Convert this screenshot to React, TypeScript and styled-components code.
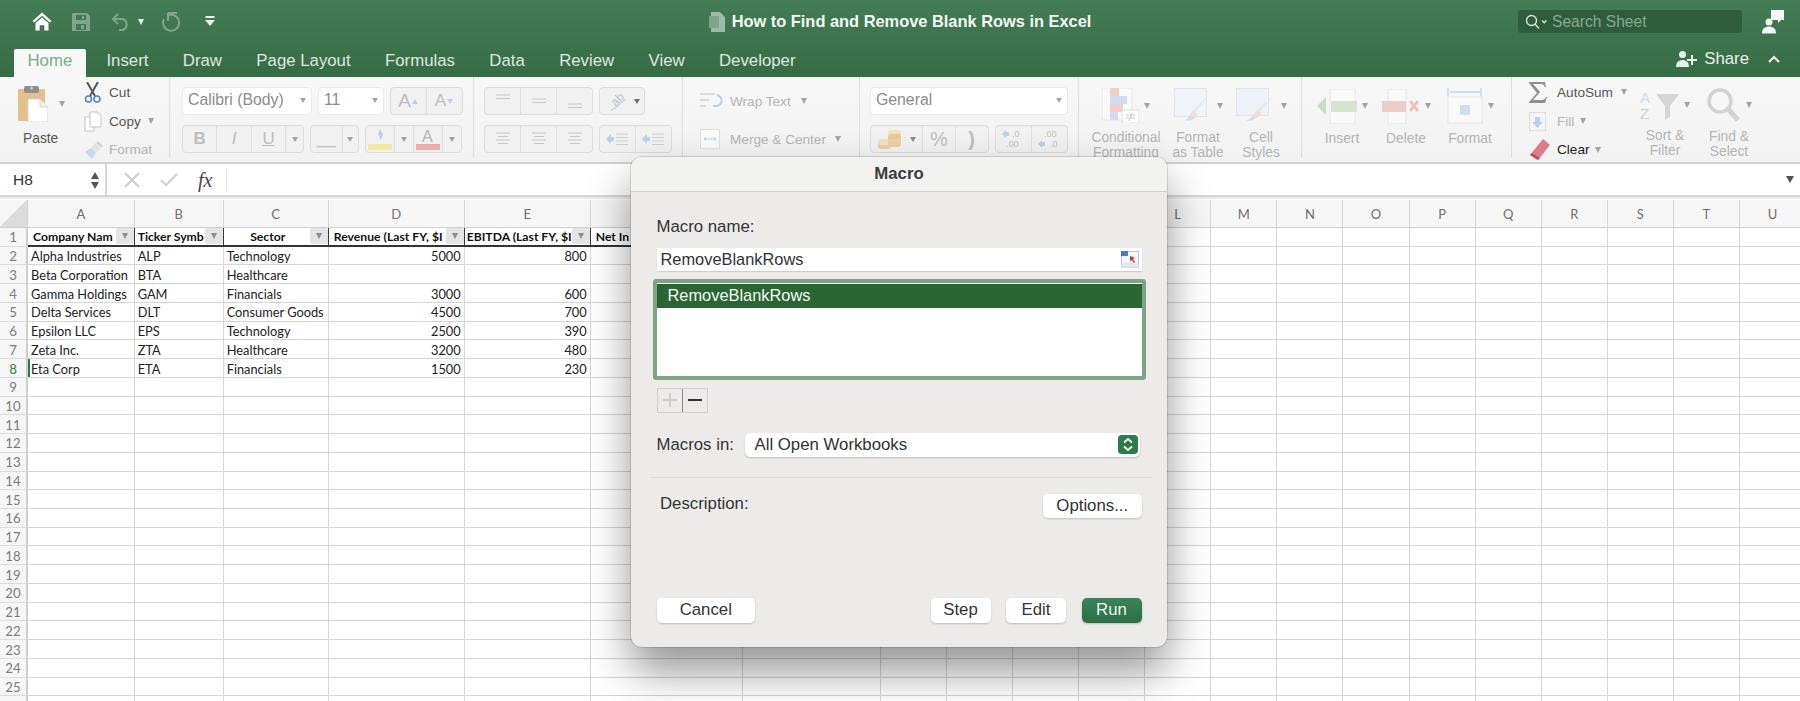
import React from "react";
import styled, { createGlobalStyle } from "styled-components";

const GlobalStyle = createGlobalStyle`
  html, body {
    margin: 0;
    padding: 0;
    background: #fff;
    font-family: "Liberation Sans", Arial, sans-serif;
  }
  * { box-sizing: border-box; }
`;

const Page = styled.div`
  position: relative;
  width: 1800px;
  height: 701px;
  overflow: hidden;
  display: flex;
  flex-direction: column;
`;

/* title bar + tabs */
const Header = styled.header`
  height: 77px;
  flex: none;
  background: linear-gradient(#447c56, #366c44);
  display: flex;
  flex-direction: column;
`;

const TitleRow = styled.div`
  height: 43px;
  display: grid;
  grid-template-columns: 1fr auto 1fr;
  align-items: center;
`;

const QuickAccess = styled.div`
  display: flex;
  align-items: center;
  padding-left: 32px;
`;

const QuickSlot = styled.span<{ $w: number }>`
  width: ${(p) => p.$w}px;
  display: flex;
  align-items: center;
`;

const DocTitle = styled.div`
  display: flex;
  align-items: center;
  gap: 6px;
  color: #f4f7f4;
  font-size: 16.4px;
  font-weight: 700;
`;

const SearchWrap = styled.div`
  display: flex;
  justify-content: flex-end;
  align-items: center;
  padding-right: 16px;
  gap: 20px;
`;

const SearchBox = styled.div`
  width: 224px;
  height: 23px;
  border-radius: 3px;
  background: #2f5d3c;
  display: flex;
  align-items: center;
  gap: 3px;
  padding-left: 7px;
  color: #86a98e;
  font-size: 15.6px;
`;

const TabsRow = styled.nav`
  height: 34px;
  display: flex;
  align-items: flex-end;
  padding-left: 10.5px;
`;

const Tab = styled.div<{ $active?: boolean }>`
  height: 28px;
  line-height: 24px;
  font-size: 16.8px;
  padding: ${(p) => (p.$active ? "0 14px" : "0 17.2px")};
  margin: ${(p) => (p.$active ? "0 3px" : "0")};
  color: ${(p) => (p.$active ? "#7faa88" : "#dfe8e0")};
  background: ${(p) => (p.$active ? "#f6f7f6" : "transparent")};
  border-radius: 2px 2px 0 0;
`;

const ShareWrap = styled.div`
  margin-left: auto;
  height: 34px;
  display: flex;
  align-items: center;
  padding: 0 20px 2px 0;
  color: #e9efe9;
  font-size: 16.8px;
  gap: 7px;
`;

const Chevron = styled.span`
  margin-left: 12px;
  display: flex;
`;

/* ribbon */
const Ribbon = styled.section`
  height: 87px;
  flex: none;
  display: flex;
  background: linear-gradient(#f7f7f7, #f2f2f2);
  border-bottom: 2px solid #cfcfcf;
`;

const Group = styled.div<{ $w: number; $pl: number }>`
  width: ${(p) => p.$w}px;
  flex: none;
  padding-left: ${(p) => p.$pl}px;
  padding-top: 10px;
  margin-bottom: 4px;
  border-right: 1px solid #dedede;
  display: flex;
  &:last-child { border-right: 0; }
`;

const Stack = styled.div<{ $gap?: number }>`
  display: flex;
  flex-direction: column;
  gap: ${(p) => p.$gap ?? 10}px;
`;

const Line = styled.div<{ $gap?: number }>`
  display: flex;
  gap: ${(p) => p.$gap ?? 6}px;
`;

const PasteBlock = styled.div`
  display: flex;
  flex-direction: column;
  width: 66px;
  color: #565656;
  font-size: 13.8px;
`;

const PasteIcon = styled.div`
  display: flex;
  align-items: center;
  gap: 11px;
  margin-top: -2px;
`;

const PasteLabel = styled.div`
  margin: 9px 0 0 5px;
`;

const ActionList = styled.div<{ $top?: number; $w?: number }>`
  display: flex;
  flex-direction: column;
  margin-top: ${(p) => p.$top ?? -9}px;
  ${(p) => (p.$w ? `width: ${p.$w}px;` : "")}
`;

const ActionRow = styled.div<{ $tone?: string; $h?: number }>`
  height: ${(p) => p.$h ?? 28.7}px;
  flex: none;
  display: flex;
  align-items: center;
  font-size: 13.6px;
  color: ${(p) => p.$tone ?? "#b4b4b4"};
`;

const ActionIcon = styled.span<{ $w?: number }>`
  width: ${(p) => p.$w ?? 25}px;
  flex: none;
  display: flex;
  align-items: center;
`;

const SelectBox = styled.div<{ $w: number }>`
  width: ${(p) => p.$w}px;
  height: 28px;
  background: #fff;
  border: 1px solid #eaeaea;
  border-radius: 4px;
  display: flex;
  align-items: center;
  justify-content: space-between;
  padding: 0 5px 2px 5px;
  font-size: 15.8px;
  color: #8c8c8c;
`;

const BtnGroup = styled.div<{ $w: number }>`
  width: ${(p) => p.$w}px;
  height: 28px;
  display: flex;
  background: #f1f1f1;
  border: 1px solid #dcdcdc;
  border-radius: 4px;
`;

const BtnCell = styled.span<{ $grow?: number; $size?: number }>`
  flex: ${(p) => p.$grow ?? 1};
  display: flex;
  align-items: center;
  justify-content: center;
  gap: 1px;
  color: #bebebe;
  font-size: ${(p) => p.$size ?? 17}px;
  border-left: 1px solid #e0e0e0;
  &:first-child { border-left: 0; }
`;

const Caret = styled.span<{ $tone?: string; $s?: number; $ml?: number; $up?: boolean }>`
  display: inline-block;
  flex: none;
  width: 0;
  height: 0;
  margin-left: ${(p) => p.$ml ?? 0}px;
  border-left: ${(p) => (p.$s ?? 6) / 2 + 0.5}px solid transparent;
  border-right: ${(p) => (p.$s ?? 6) / 2 + 0.5}px solid transparent;
  border-${(p) => (p.$up ? "bottom" : "top")}: ${(p) => p.$s ?? 6}px solid ${(p) => p.$tone ?? "#a4a4a4"};
`;

const LargeItem = styled.div<{ $w: number }>`
  width: ${(p) => p.$w}px;
  flex: none;
  display: flex;
  flex-direction: column;
  align-items: center;
  margin-top: 1px;
`;

const LargeIcon = styled.div`
  height: 36px;
  display: flex;
  align-items: center;
  gap: 5px;
  svg { opacity: 0.82; }
`;

const LargeLabel = styled.div`
  margin-top: 7px;
  font-size: 13.8px;
  line-height: 15px;
  text-align: center;
  color: #b4b4b4;
  white-space: nowrap;
`;

/* formula bar */
const FormulaBar = styled.div`
  height: 33px;
  flex: none;
  background: #fff;
  display: flex;
  align-items: center;
  border-bottom: 2px solid #d5d5d5;
  box-shadow: 0 2px 0 #ececec;
`;

const NameBox = styled.div`
  width: 107px;
  height: 100%;
  display: flex;
  align-items: center;
  justify-content: space-between;
  padding: 1px 6px 0 13px;
  font-size: 15.5px;
  color: #333;
  border-right: 2px solid #d8d8d8;
`;

const Stepper = styled.span`
  display: flex;
  flex-direction: column;
  gap: 3px;
`;

const FormulaTools = styled.div`
  display: flex;
  align-items: center;
  gap: 20px;
  padding-left: 17px;
`;

const FxMark = styled.span`
  font-family: "Liberation Serif", serif;
  font-style: italic;
  font-size: 20px;
  color: #444;
  width: 29px;
  border-right: 1px solid #e3e3e3;
  line-height: 22px;
`;

const FormulaCaret = styled.div`
  margin-left: auto;
  padding-right: 6px;
  display: flex;
`;

/* sheet */
const Sheet = styled.div`
  margin-top: 3px;
  flex: 1;
  overflow: hidden;
  display: grid;
  grid-template-columns: 28px 106.7px 89px 105px 136px 126px 152.4px 137.7px repeat(14, 66.1px);
  grid-template-rows: 28px repeat(26, 18.74px);
  font-family: Lato, "Open Sans", sans-serif;
  background: #fff;
`;

const Corner = styled.div`
  background: linear-gradient(135deg, #f6f6f6 50%, #dcdcdc 50%);
  border-right: 1px solid #cfcfcf;
  border-bottom: 1px solid #cfcfcf;
`;

const ColHead = styled.div`
  background: #f6f6f6;
  border-right: 1px solid #d6d6d6;
  border-bottom: 1px solid #cfcfcf;
  display: flex;
  align-items: center;
  justify-content: center;
  padding-top: 1px;
  font-size: 13px;
  color: #6f6f6f;
`;

const RowHead = styled.div<{ $active?: boolean }>`
  background: #f6f6f6;
  border-right: 2px solid #cfcfcf;
  border-bottom: 1px solid #dcdcdc;
  display: flex;
  align-items: center;
  justify-content: center;
  padding-top: 1px;
  font-size: 13.2px;
  color: ${(p) => (p.$active ? "#2d7a4b" : "#7b7b7b")};
`;

const Cell = styled.div<{ $right?: boolean; $mark?: boolean }>`
  border-right: 1px solid #d6d6d6;
  border-bottom: 1px solid #d6d6d6;
  ${(p) => (p.$mark ? "box-shadow: inset 2px 0 0 #2d7a4b;" : "")}
  padding: 1px 3px 0;
  display: flex;
  align-items: center;
  justify-content: ${(p) => (p.$right ? "flex-end" : "flex-start")};
  font-size: 12.8px;
  color: #222;
  white-space: nowrap;
  overflow: hidden;
`;

const FilterCell = styled.div<{ $tail?: boolean }>`
  border-right: 1.5px solid ${(p) => (p.$tail ? "#d6d6d6" : "#3a3a3a")};
  border-bottom: 2px solid #333;
  display: flex;
  align-items: center;
  font-size: 12.2px;
  font-weight: 700;
  color: #111;
  white-space: nowrap;
  overflow: hidden;
`;

const FilterText = styled.span<{ $left?: boolean }>`
  flex: 1;
  min-width: 0;
  padding-left: ${(p) => (p.$left ? 5 : 2)}px;
  text-align: ${(p) => (p.$left ? "left" : "center")};
`;

const FilterButton = styled.span`
  width: 18px;
  height: 16px;
  flex: none;
  background: #e4e4e4;
  border-radius: 2px;
  display: flex;
  align-items: center;
  justify-content: center;
`;

/* macro dialog, floats over the sheet */
const Dialog = styled.div`
  position: absolute;
  left: 631px;
  top: 156.5px;
  width: 536px;
  height: 490px;
  background: #ecebe9;
  border-radius: 11px;
  box-shadow: 0 0 0 1px rgba(0, 0, 0, 0.12), 0 24px 44px rgba(0, 0, 0, 0.42);
  display: flex;
  flex-direction: column;
  color: #333;
  font-size: 16.8px;
`;

const DialogTitle = styled.div`
  height: 35px;
  flex: none;
  background: #f2f2f0;
  border-bottom: 1px solid #d2d2d0;
  border-radius: 11px 11px 0 0;
  display: flex;
  align-items: center;
  justify-content: center;
  font-weight: 700;
  color: #3c3c3c;
`;

const DialogBody = styled.div`
  flex: 1;
  padding: 25px 25.5px 24px;
  display: flex;
  flex-direction: column;
`;

const NameLabel = styled.div`
  height: 20px;
  line-height: 20px;
`;

const NameInput = styled.div`
  margin-top: 11px;
  height: 23px;
  background: #fff;
  display: flex;
  align-items: center;
  justify-content: space-between;
  padding: 0 3px 0 4px;
  font-size: 16.4px;
  box-shadow: 0 1px 1px rgba(0, 0, 0, 0.12);
`;

const MacroList = styled.div`
  margin: 8px -4px 0;
  height: 101px;
  flex: none;
  background: #fff;
  border: 4px solid #7fa384;
  border-radius: 3px;
`;

const MacroItem = styled.div`
  height: 24px;
  margin-top: 1px;
  padding-left: 11px;
  display: flex;
  align-items: center;
  background: #2a6633;
  color: #f4f7f4;
  font-size: 16.4px;
`;

const PlusMinus = styled.div`
  margin-top: 8px;
  width: 51px;
  height: 25px;
  flex: none;
  display: flex;
  border: 1px solid #d0d0ce;
`;

const PlusMinusCell = styled.span<{ $on?: boolean }>`
  flex: 1;
  display: flex;
  align-items: center;
  justify-content: center;
  border-left: ${(p) => (p.$on ? "1px solid #8a8a8a" : "0")};
`;

const SourceRow = styled.div`
  margin-top: 20px;
  display: flex;
  align-items: center;
  height: 24px;
`;

const SourceLabel = styled.div`
  width: 88px;
  flex: none;
`;

const SourceSelect = styled.div`
  width: 395px;
  height: 24px;
  background: #fff;
  border-radius: 5px;
  box-shadow: 0 1px 2px rgba(0, 0, 0, 0.2);
  display: flex;
  align-items: center;
  justify-content: space-between;
  padding: 0 2px 0 10px;
`;

const StepBadge = styled.span`
  width: 20px;
  height: 19px;
  border-radius: 4px;
  background: #2e7a4b;
  display: flex;
  align-items: center;
  justify-content: center;
`;

const Divider = styled.div`
  margin: 20px -10px 0 -6.5px;
  height: 1px;
  flex: none;
  background: #dcdcda;
`;

const DescRow = styled.div`
  margin-top: 16px;
  display: flex;
  justify-content: space-between;
  padding-left: 3.5px;
`;

const DescLabel = styled.div`
  line-height: 20px;
`;

const DialogButton = styled.div<{ $w: number; $primary?: boolean }>`
  width: ${(p) => p.$w}px;
  height: 24.5px;
  border-radius: 5px;
  background: ${(p) => (p.$primary ? "linear-gradient(#3a8358, #2b6f45)" : "#fff")};
  color: ${(p) => (p.$primary ? "#f2f6f2" : "#333")};
  box-shadow: 0 1px 2px rgba(0, 0, 0, 0.2);
  display: flex;
  align-items: center;
  justify-content: center;
`;

const DialogFooter = styled.div`
  margin-top: auto;
  display: flex;
  gap: 15.5px;
  & > :first-child { margin-right: auto; }
`;

/* icons */
const Home = () => (
  <svg width="20" height="19" viewBox="0 0 20 19" fill="#fff">
    <path d="M10 0.5 0.5 9l1.6 1.6L10 3.7l7.9 6.9L19.500 9z" />
    <path d="M3.500 11 10 5.500 16.500 11v7.500h-4.200v-5.300H7.700v5.300H3.500z" />
  </svg>
);
const Save = () => (
  <svg width="18" height="18" viewBox="0 0 18 18" fill="#7fa68c">
    <path d="M1 0h14l3 3v15H0V1zM4 2v5h10V2zM4 11v6h10v-6z" />
    <path d="M10 3h2v3h-2zM9 12h3v4H9z" />
  </svg>
);
const Undo = () => (
  <svg width="20" height="18" viewBox="0 0 20 18" fill="none" stroke="#7fa68c" strokeWidth="2">
    <path d="M7 1 2 6l5 5M2 6h10a6 6 0 0 1 0 11H8" />
  </svg>
);
const Redo = () => (
  <svg width="20" height="20" viewBox="0 0 20 20" fill="none" stroke="#7fa68c" strokeWidth="2">
    <path d="M7 1h9M7 1v8M8 3A8 8 0 1 1 3 7" />
  </svg>
);
const QatMenu = () => (
  <svg width="10" height="11" viewBox="0 0 10 11" fill="#f2f5f2">
    <rect x="0.500" y="0" width="9" height="2" />
    <path d="M0 4h10l-5 6z" />
  </svg>
);
const DocIcon = () => (
  <svg width="17" height="20" viewBox="0 0 17 20">
    <path d="M2 0h9l5 5v15H2z" fill="#9dbca6" />
    <rect x="0" y="4" width="10" height="12" fill="#7fa58c" />
  </svg>
);
const SearchIcon = () => (
  <svg width="24" height="16" viewBox="0 0 24 16" fill="none" stroke="#d8e3da" strokeWidth="1.400">
    <circle cx="6.500" cy="6.500" r="5" />
    <path d="m10 10 4 4.500M17 6.500l2.200 2.200 2.200-2.200" />
  </svg>
);
const Profile = () => (
  <svg width="22" height="24" viewBox="0 0 22 24" fill="#f4f7f4">
    <path d="M9 0h13v10h-3l-3 3v-3H9z" />
    <circle cx="7" cy="12" r="3.500" />
    <path d="M0 23.500c0-5 3-7 7-7s7 2 7 7z" />
  </svg>
);
const AddPerson = () => (
  <svg width="21" height="18" viewBox="0 0 21 18" fill="#e9efe9">
    <circle cx="6.500" cy="4.500" r="3.500" />
    <path d="M0 17c0-5 3-7 6.500-7s6.500 2 6.500 7zM15 5h2v4h4v2h-4v4h-2v-4h-4V9h4z" />
  </svg>
);
const ChevronUp = () => (
  <svg width="12" height="8" viewBox="0 0 12 8" fill="none" stroke="#e9efe9" strokeWidth="2.200">
    <path d="m1 7 5-5 5 5" />
  </svg>
);
const PasteGlyph = () => (
  <svg width="30" height="37" viewBox="0 0 30 37">
    <rect x="0" y="4" width="27" height="32" rx="1" fill="#e3c08d" />
    <rect x="6" y="1" width="15" height="7" rx="2" fill="#8e8e8e" />
    <circle cx="13.500" cy="3" r="1.500" fill="#c9c9c9" />
    <path d="M10 14h12l8 8v15H10z" fill="#fff" stroke="#d5d5d5" />
    <path d="M22 14v8h8" fill="#eee" stroke="#d5d5d5" />
  </svg>
);
const Scissors = () => (
  <svg width="18" height="21" viewBox="0 0 18 21" fill="none">
    <path d="M3 0l8 14M14 0 6 14" stroke="#555" strokeWidth="2" />
    <circle cx="4.500" cy="17" r="3" stroke="#4f84c4" strokeWidth="1.600" />
    <circle cx="13" cy="17" r="3" stroke="#4f84c4" strokeWidth="1.600" />
  </svg>
);
const CopyGlyph = () => (
  <svg width="18" height="21" viewBox="0 0 18 21" fill="#fff" stroke="#c4c4c4">
    <path d="M1 6h9v14H1z" />
    <path d="M6 1h7l4 4v11H6z" />
  </svg>
);
const FormatPainter = () => (
  <svg width="20" height="20" viewBox="0 0 20 20">
    <path d="M11 3l6 6-5 4-5-5z" fill="#e2e2e2" />
    <path d="M7 8l5 5-4 6-7-7z" fill="#c9d8ea" />
    <path d="M14 1l5 5-2 2-5-5z" fill="#d6d6d6" />
  </svg>
);
const Lines = ({ widths, y }: { widths: number[]; y: number }) => (
  <svg width="20" height="18" viewBox="0 0 20 18" stroke="#c8c8c8" strokeWidth="1">
    {widths.map((w, i) => (
      <line key={i} x1={10 - w / 2} x2={10 + w / 2} y1={y + i * 3.500} y2={y + i * 3.500} />
    ))}
  </svg>
);
const Orient = () => (
  <svg width="24" height="22" viewBox="0 0 24 22">
    <text x="6" y="14" fontSize="12" fill="#c0c0c0" fontFamily="Liberation Sans" transform="rotate(-45 12 10)">ab</text>
    <path d="M6 21 21 9" stroke="#c6d6ec" strokeWidth="1.400" />
  </svg>
);
const Indent = () => (
  <svg width="22" height="16" viewBox="0 0 22 16">
    <path d="M0 8l5-5v3h3v4H5v3z" fill="#bcd0ea" />
    <path d="M10 3h12M10 6.500h12M10 10h12M10 13.500h12" stroke="#cfcfcf" />
  </svg>
);
const WrapGlyph = () => (
  <svg width="24" height="18" viewBox="0 0 24 18" fill="none">
    <path d="M0 2h15M0 8h9M0 14h6" stroke="#dcdcdc" strokeWidth="2" />
    <path d="M17 3c6 2 6 9 0 11l-4 0" stroke="#b9cfe9" strokeWidth="2" />
  </svg>
);
const MergeGlyph = () => (
  <svg width="20" height="20" viewBox="0 0 20 20" fill="none">
    <rect x="0.500" y="0.500" width="19" height="19" stroke="#e0e0e0" fill="#fafafa" />
    <path d="M4 10h12M4 10l2-2M4 10l2 2M16 10l-2-2M16 10l-2 2" stroke="#b9cfe9" />
  </svg>
);
const Coins = () => (
  <svg width="26" height="22" viewBox="0 0 26 22">
    <rect x="1" y="14" width="13" height="7" rx="3" fill="#e8d2a4" />
    <rect x="1" y="11" width="13" height="6" rx="3" fill="#f0e0bc" />
    <rect x="11" y="8" width="13" height="11" rx="3" fill="#e8d2a4" />
    <rect x="11" y="2" width="13" height="6" rx="3" fill="#f0e0bc" />
    <rect x="11" y="6" width="13" height="5" rx="2.500" fill="#e4cc9a" />
  </svg>
);
const DecimalUp = () => (
  <svg width="22" height="20" viewBox="0 0 22 20">
    <path d="M0 5l4-4v2h3v4H4v2z" fill="#bcd0ea" />
    <text x="10" y="8" fontSize="9" fill="#c2c2c2" fontFamily="Liberation Sans">.0</text>
    <text x="4" y="18" fontSize="9" fill="#c2c2c2" fontFamily="Liberation Sans">.00</text>
  </svg>
);
const DecimalDown = () => (
  <svg width="22" height="20" viewBox="0 0 22 20">
    <text x="6" y="8" fontSize="9" fill="#c2c2c2" fontFamily="Liberation Sans">.00</text>
    <path d="M0 15l4-4v2h3v4H4v2z" fill="#bcd0ea" />
    <text x="12" y="18" fontSize="9" fill="#c2c2c2" fontFamily="Liberation Sans">.0</text>
  </svg>
);
const Conditional = () => (
  <svg width="37" height="35" viewBox="0 0 37 35">
    <path d="M0 0h30v32H0z" fill="#fafafa" stroke="#e4e4e4" />
    <rect x="8" y="0" width="9" height="8" fill="#eec7c3" />
    <rect x="8" y="8" width="17" height="8" fill="#c8d8f0" />
    <rect x="8" y="16" width="13" height="8" fill="#eec7c3" />
    <rect x="8" y="24" width="8" height="8" fill="#c8d8f0" />
    <rect x="20" y="22" width="17" height="13" fill="#fff" stroke="#dcdcdc" />
    <path d="M24 27h9M24 30h9M30 25l-3 8" stroke="#bdbdbd" />
  </svg>
);
const TableBrush = () => (
  <svg width="38" height="35" viewBox="0 0 38 35">
    <rect x="0.500" y="0.500" width="32" height="28" fill="#eff3f9" stroke="#e1e1e1" />
    <path d="M36 6 20 26l-3-2z" fill="#e6e6e6" />
    <path d="M19 23l4 3c-1 5-7 8-12 6 4-2 5-6 8-9z" fill="#c9d8ee" />
    <path d="M19 23l4 3-2 3-5-1z" fill="#f2dcc2" />
  </svg>
);
const CellBrush = () => (
  <svg width="40" height="35" viewBox="0 0 40 35">
    <rect x="0.500" y="0.500" width="32" height="27" fill="#edf2f9" stroke="#e2e2e2" />
    <path d="M38 8 22 25l-3-2z" fill="#e6e6e6" />
    <path d="M21 22l4 3c-1 4-4 5-6 5-2 3-5 3-9 3 5-2 7-7 11-11z" fill="#f2dcc2" />
    <path d="M10 33c3-1 5-3 7-5l3 1c-2 3-5 4-10 4z" fill="#c9d8ee" />
  </svg>
);
const InsertCells = () => (
  <svg width="40" height="35" viewBox="0 0 40 35">
    <path d="M13 0h25v35H13z" fill="#fafafa" stroke="#e4e4e4" />
    <rect x="14" y="12" width="26" height="11" fill="#cfe0c8" />
    <path d="M0 17 9 8v18z" fill="#bcd9bb" />
  </svg>
);
const DeleteCells = () => (
  <svg width="38" height="35" viewBox="0 0 38 35">
    <path d="M6 0h18v35H6z" fill="#fafafa" stroke="#e4e4e4" />
    <rect x="0" y="12" width="24" height="11" fill="#eec4c4" />
    <path d="M28 12l8 10M36 12l-8 10" stroke="#ecb6b6" strokeWidth="3" />
  </svg>
);
const FormatCells = () => (
  <svg width="36" height="36" viewBox="0 0 36 36">
    <path d="M1 0v8M34 0v8M3 4h30" stroke="#bcd0ea" strokeWidth="1.500" />
    <rect x="1" y="9" width="34" height="26" fill="#fafafa" stroke="#e4e4e4" />
    <rect x="13" y="17" width="10" height="10" fill="#c8d8f0" />
  </svg>
);
const Sigma = () => (
  <svg width="18" height="21" viewBox="0 0 18 21" fill="#8f8f8f">
    <path d="M0 0h16l1 5h-1c-1-2-2-3-4-3H4l7 8-7 8h9c2 0 3-1 4-3h1l-2 6H0v-1l8-9-8-10z" />
  </svg>
);
const FillGlyph = () => (
  <svg width="17" height="19" viewBox="0 0 17 19">
    <rect x="0.500" y="0.500" width="16" height="18" fill="#f4f4f4" stroke="#dedede" />
    <path d="M6 5h5v5h3l-5.500 6L3 10h3z" fill="#bcd0ea" />
  </svg>
);
const Eraser = () => (
  <svg width="21" height="21" viewBox="0 0 21 21">
    <path d="M14 0l7 6L9 21 1 16z" fill="#dd7c88" />
    <path d="M1 16l8 5 2-2-8-5z" fill="#b8505d" />
  </svg>
);
const SortFilter = () => (
  <svg width="39" height="32" viewBox="0 0 39 32">
    <text x="0" y="14" fontSize="15" fill="#c5d6ec" fontFamily="Liberation Sans">A</text>
    <text x="0" y="30" fontSize="15" fill="#c9c9c9" fontFamily="Liberation Sans">Z</text>
    <path d="M16 5h23L30 17v11l-5 3V17z" fill="#cfcfcf" />
  </svg>
);
const Magnifier = () => (
  <svg width="34" height="34" viewBox="0 0 34 34" fill="none" stroke="#cccccc">
    <circle cx="13" cy="13" r="11" strokeWidth="3.500" />
    <path d="M21 21l10 11" strokeWidth="5" />
  </svg>
);
const CloseMark = () => (
  <svg width="16" height="16" viewBox="0 0 16 16" stroke="#cfcfcf" strokeWidth="2.400">
    <path d="M1 1l14 14M15 1 1 15" />
  </svg>
);
const CheckMark = () => (
  <svg width="18" height="14" viewBox="0 0 18 14" fill="none" stroke="#d2d2d2" strokeWidth="2.400">
    <path d="M1 7l5 5L17 1" />
  </svg>
);
const UpArrow = () => (
  <svg width="8" height="7" viewBox="0 0 8 7" fill="#555"><path d="M4 0l4 7H0z" /></svg>
);
const DownArrow = () => (
  <svg width="8" height="7" viewBox="0 0 8 7" fill="#555"><path d="M0 0h8L4 7z" /></svg>
);
const PickerIcon = () => (
  <svg width="18" height="17" viewBox="0 0 18 17">
    <rect x="0.500" y="0.500" width="17" height="16" fill="#f3f5f8" stroke="#b9c6d8" />
    <rect x="0" y="0" width="7" height="5" fill="#4d79c7" />
    <path d="M9 5l5 2-2 1 2 3-1 1-2-3-2 1z" fill="#c9363a" />
    <rect x="0" y="12" width="18" height="5" fill="#d9e3f0" opacity="0.700" />
  </svg>
);
const UpDown = () => (
  <svg width="12" height="15" viewBox="0 0 12 15" fill="none" stroke="#fff" strokeWidth="1.800">
    <path d="M2 5.500 6 2l4 3.500M2 9.500 6 13l4-3.500" />
  </svg>
);

const columns = ["A", "B", "C", "D", "E", "F", "G", "H", "I", "J", "K", "L", "M", "N", "O", "P", "Q", "R", "S", "T", "U"];
// F to K sit behind the dialog, their letters never show
const coveredCols = ["F", "G", "H", "I", "J", "K"];
const filters = ["Company Nam", "Ticker Symb", "Sector", "Revenue (Last FY, $I", "EBITDA (Last FY, $I"];
const companies = [
  ["Alpha Industries", "ALP", "Technology", "5000", "800"],
  ["Beta Corporation", "BTA", "Healthcare", "", ""],
  ["Gamma Holdings", "GAM", "Financials", "3000", "600"],
  ["Delta Services", "DLT", "Consumer Goods", "4500", "700"],
  ["Epsilon LLC", "EPS", "Technology", "2500", "390"],
  ["Zeta Inc.", "ZTA", "Healthcare", "3200", "480"],
  ["Eta Corp", "ETA", "Financials", "1500", "230"],
];
const tabs = ["Insert", "Draw", "Page Layout", "Formulas", "Data", "Review", "View", "Developer"];

const App = () => {
  const blankCols = columns.slice(5);
  const restRows = Array.from({ length: 17 }, (_, i) => i + 9);
  return (
    <Page>
      <GlobalStyle />
      <Header>
        <TitleRow>
          <QuickAccess>
            <QuickSlot $w={40}><Home /></QuickSlot>
            <QuickSlot $w={39}><Save /></QuickSlot>
            <QuickSlot $w={27}><Undo /></QuickSlot>
            <QuickSlot $w={23}><Caret $tone="#e6ece6" /></QuickSlot>
            <QuickSlot $w={44}><Redo /></QuickSlot>
            <QuickSlot $w={10}><QatMenu /></QuickSlot>
          </QuickAccess>
          <DocTitle>
            <DocIcon />
            How to Find and Remove Blank Rows in Excel
          </DocTitle>
          <SearchWrap>
            <SearchBox>
              <SearchIcon />
              Search Sheet
            </SearchBox>
            <Profile />
          </SearchWrap>
        </TitleRow>
        <TabsRow>
          <Tab $active>Home</Tab>
          {tabs.map((t) => (
            <Tab key={t}>{t}</Tab>
          ))}
          <ShareWrap>
            <AddPerson />
            Share
            <Chevron><ChevronUp /></Chevron>
          </ShareWrap>
        </TabsRow>
      </Header>

      <Ribbon>
        <Group $w={170} $pl={18}>
          <PasteBlock>
            <PasteIcon>
              <PasteGlyph />
              <Caret />
            </PasteIcon>
            <PasteLabel>Paste</PasteLabel>
          </PasteBlock>
          <ActionList>
            <ActionRow $tone="#555"><ActionIcon><Scissors /></ActionIcon>Cut</ActionRow>
            <ActionRow $tone="#555"><ActionIcon><CopyGlyph /></ActionIcon>Copy<Caret $ml={7} /></ActionRow>
            <ActionRow><ActionIcon><FormatPainter /></ActionIcon>Format</ActionRow>
          </ActionList>
        </Group>

        <Group $w={304} $pl={12}>
          <Stack>
            <Line>
              <SelectBox $w={130}>Calibri (Body)<Caret $s={5} /></SelectBox>
              <SelectBox $w={65.500}>11<Caret $s={5} /></SelectBox>
              <BtnGroup $w={73}>
                <BtnCell $size={19}>A<Caret $up $s={5} $tone="#bcd0ea" /></BtnCell>
                <BtnCell>A<Caret $s={5} $tone="#bcd0ea" /></BtnCell>
              </BtnGroup>
            </Line>
            <Line>
              <BtnGroup $w={122}>
                <BtnCell><b>B</b></BtnCell>
                <BtnCell><i>I</i></BtnCell>
                <BtnCell><u>U</u></BtnCell>
                <BtnCell $grow={0.500}><Caret $s={5} /></BtnCell>
              </BtnGroup>
              <BtnGroup $w={49}>
                <BtnCell $grow={2}>__</BtnCell>
                <BtnCell><Caret $s={5} /></BtnCell>
              </BtnGroup>
              <BtnGroup $w={96.500}>
                <BtnCell $grow={1.600}>
                  <svg width="26" height="24" viewBox="0 0 26 24">
                    <path d="M13 2l-2 5 3 6 2-6z" fill="#bcd0ea" />
                    <rect x="1" y="17" width="24" height="6" fill="#f3ea9e" />
                  </svg>
                </BtnCell>
                <BtnCell><Caret $s={5} /></BtnCell>
                <BtnCell $grow={1.600}>
                  <svg width="26" height="24" viewBox="0 0 26 24">
                    <text x="7" y="15" fontSize="16" fill="#b4b4b4" fontFamily="Liberation Sans">A</text>
                    <rect x="1" y="17" width="24" height="6" fill="#eeaaaa" />
                  </svg>
                </BtnCell>
                <BtnCell><Caret $s={5} /></BtnCell>
              </BtnGroup>
            </Line>
          </Stack>
        </Group>

        <Group $w={209} $pl={10}>
          <Stack>
            <Line>
              <BtnGroup $w={109}>
                <BtnCell><Lines widths={[14, 14]} y={3} /></BtnCell>
                <BtnCell><Lines widths={[14, 14]} y={7} /></BtnCell>
                <BtnCell><Lines widths={[14, 14]} y={12} /></BtnCell>
              </BtnGroup>
              <BtnGroup $w={46}>
                <BtnCell><Orient /><Caret $s={5} $tone="#6f6f6f" $ml={4} /></BtnCell>
              </BtnGroup>
            </Line>
            <Line>
              <BtnGroup $w={109}>
                <BtnCell><Lines widths={[14, 10, 14, 10]} y={3} /></BtnCell>
                <BtnCell><Lines widths={[14, 10, 14, 10]} y={3} /></BtnCell>
                <BtnCell><Lines widths={[14, 10, 14, 10]} y={3} /></BtnCell>
              </BtnGroup>
              <BtnGroup $w={72.600}>
                <BtnCell><Indent /></BtnCell>
                <BtnCell><Indent /></BtnCell>
              </BtnGroup>
            </Line>
          </Stack>
        </Group>

        <Group $w={176.500} $pl={17}>
          <ActionList $top={-5}>
            <ActionRow $h={38}><ActionIcon $w={30}><WrapGlyph /></ActionIcon>Wrap Text<Caret $ml={10} /></ActionRow>
            <ActionRow $h={38}><ActionIcon $w={30}><MergeGlyph /></ActionIcon>Merge &amp; Center<Caret $ml={9} /></ActionRow>
          </ActionList>
        </Group>

        <Group $w={219.500} $pl={10.500}>
          <Stack>
            <SelectBox $w={197.700}>General<Caret $s={5} /></SelectBox>
            <Line $gap={6.500}>
              <BtnGroup $w={118.500}>
                <BtnCell $grow={1.600}><Coins /><Caret $s={5} $ml={6} $tone="#8a8a8a" /></BtnCell>
                <BtnCell $size={20}>%</BtnCell>
                <BtnCell $size={20}><b>)</b></BtnCell>
              </BtnGroup>
              <BtnGroup $w={72.700}>
                <BtnCell><DecimalUp /></BtnCell>
                <BtnCell><DecimalDown /></BtnCell>
              </BtnGroup>
            </Line>
          </Stack>
        </Group>

        <Group $w={223} $pl={11}>
          <LargeItem $w={72}>
            <LargeIcon><Conditional /><Caret /></LargeIcon>
            <LargeLabel>Conditional<br />Formatting</LargeLabel>
          </LargeItem>
          <LargeItem $w={72}>
            <LargeIcon><TableBrush /><Caret /></LargeIcon>
            <LargeLabel>Format<br />as Table</LargeLabel>
          </LargeItem>
          <LargeItem $w={54}>
            <LargeIcon><CellBrush /><Caret /></LargeIcon>
            <LargeLabel>Cell<br />Styles</LargeLabel>
          </LargeItem>
        </Group>

        <Group $w={210} $pl={8}>
          <LargeItem $w={64}>
            <LargeIcon><InsertCells /><Caret /></LargeIcon>
            <LargeLabel>Insert</LargeLabel>
          </LargeItem>
          <LargeItem $w={64}>
            <LargeIcon><DeleteCells /><Caret /></LargeIcon>
            <LargeLabel>Delete</LargeLabel>
          </LargeItem>
          <LargeItem $w={64}>
            <LargeIcon><FormatCells /><Caret /></LargeIcon>
            <LargeLabel>Format</LargeLabel>
          </LargeItem>
        </Group>

        <Group $w={288} $pl={17}>
          <ActionList $w={104}>
            <ActionRow $tone="#555"><ActionIcon $w={28}><Sigma /></ActionIcon>AutoSum<Caret $ml={8} /></ActionRow>
            <ActionRow><ActionIcon $w={28}><FillGlyph /></ActionIcon>Fill<Caret $ml={6} /></ActionRow>
            <ActionRow $tone="#222"><ActionIcon $w={28}><Eraser /></ActionIcon>Clear<Caret $ml={6} /></ActionRow>
          </ActionList>
          <LargeItem $w={64}>
            <LargeIcon><SortFilter /><Caret /></LargeIcon>
            <LargeLabel>Sort &amp;<br />Filter</LargeLabel>
          </LargeItem>
          <LargeItem $w={64}>
            <LargeIcon><Magnifier /><Caret /></LargeIcon>
            <LargeLabel>Find &amp;<br />Select</LargeLabel>
          </LargeItem>
        </Group>
      </Ribbon>

      <FormulaBar>
        <NameBox>
          H8
          <Stepper><UpArrow /><DownArrow /></Stepper>
        </NameBox>
        <FormulaTools>
          <CloseMark />
          <CheckMark />
          <FxMark>fx</FxMark>
        </FormulaTools>
        <FormulaCaret><DownArrow /></FormulaCaret>
      </FormulaBar>

      <Sheet>
        <Corner />
        {columns.map((c) => (
          <ColHead key={c}>{coveredCols.includes(c) ? "" : c}</ColHead>
        ))}

        <RowHead>1</RowHead>
        {filters.map((f) => (
          <FilterCell key={f}>
            <FilterText>{f}</FilterText>
            <FilterButton><Caret $s={6} $tone="#8d8d8d" /></FilterButton>
          </FilterCell>
        ))}
        <FilterCell $tail>
          <FilterText $left>Net In</FilterText>
        </FilterCell>
        {blankCols.slice(1).map((c) => (
          <Cell key={c} />
        ))}

        {companies.map((row, i) => (
          <React.Fragment key={row[0]}>
            <RowHead $active={i === 6}>{i + 2}</RowHead>
            <Cell $mark={i === 6}>{row[0]}</Cell>
            <Cell>{row[1]}</Cell>
            <Cell>{row[2]}</Cell>
            <Cell $right>{row[3]}</Cell>
            <Cell $right>{row[4]}</Cell>
            {blankCols.map((c) => (
              <Cell key={c} />
            ))}
          </React.Fragment>
        ))}

        {restRows.map((n) => (
          <React.Fragment key={n}>
            <RowHead>{n}</RowHead>
            {columns.map((c) => (
              <Cell key={c} />
            ))}
          </React.Fragment>
        ))}

        <RowHead />
        {columns.map((c) => (
          <Cell key={c} />
        ))}
      </Sheet>

      <Dialog>
        <DialogTitle>Macro</DialogTitle>
        <DialogBody>
          <NameLabel>Macro name:</NameLabel>
          <NameInput>
            RemoveBlankRows
            <PickerIcon />
          </NameInput>
          <MacroList>
            <MacroItem>RemoveBlankRows</MacroItem>
          </MacroList>
          <PlusMinus>
            <PlusMinusCell>
              <svg width="14" height="14" viewBox="0 0 14 14" stroke="#c4c4c4" strokeWidth="1.400">
                <path d="M7 0v14M0 7h14" />
              </svg>
            </PlusMinusCell>
            <PlusMinusCell $on>
              <svg width="14" height="2" viewBox="0 0 14 2" stroke="#333" strokeWidth="2">
                <path d="M0 1h14" />
              </svg>
            </PlusMinusCell>
          </PlusMinus>
          <SourceRow>
            <SourceLabel>Macros in:</SourceLabel>
            <SourceSelect>
              All Open Workbooks
              <StepBadge><UpDown /></StepBadge>
            </SourceSelect>
          </SourceRow>
          <Divider />
          <DescRow>
            <DescLabel>Description:</DescLabel>
            <DialogButton $w={98.500}>Options...</DialogButton>
          </DescRow>
          <DialogFooter>
            <DialogButton $w={98.500}>Cancel</DialogButton>
            <DialogButton $w={60}>Step</DialogButton>
            <DialogButton $w={60}>Edit</DialogButton>
            <DialogButton $w={60} $primary>Run</DialogButton>
          </DialogFooter>
        </DialogBody>
      </Dialog>
    </Page>
  );
};

export default App;
